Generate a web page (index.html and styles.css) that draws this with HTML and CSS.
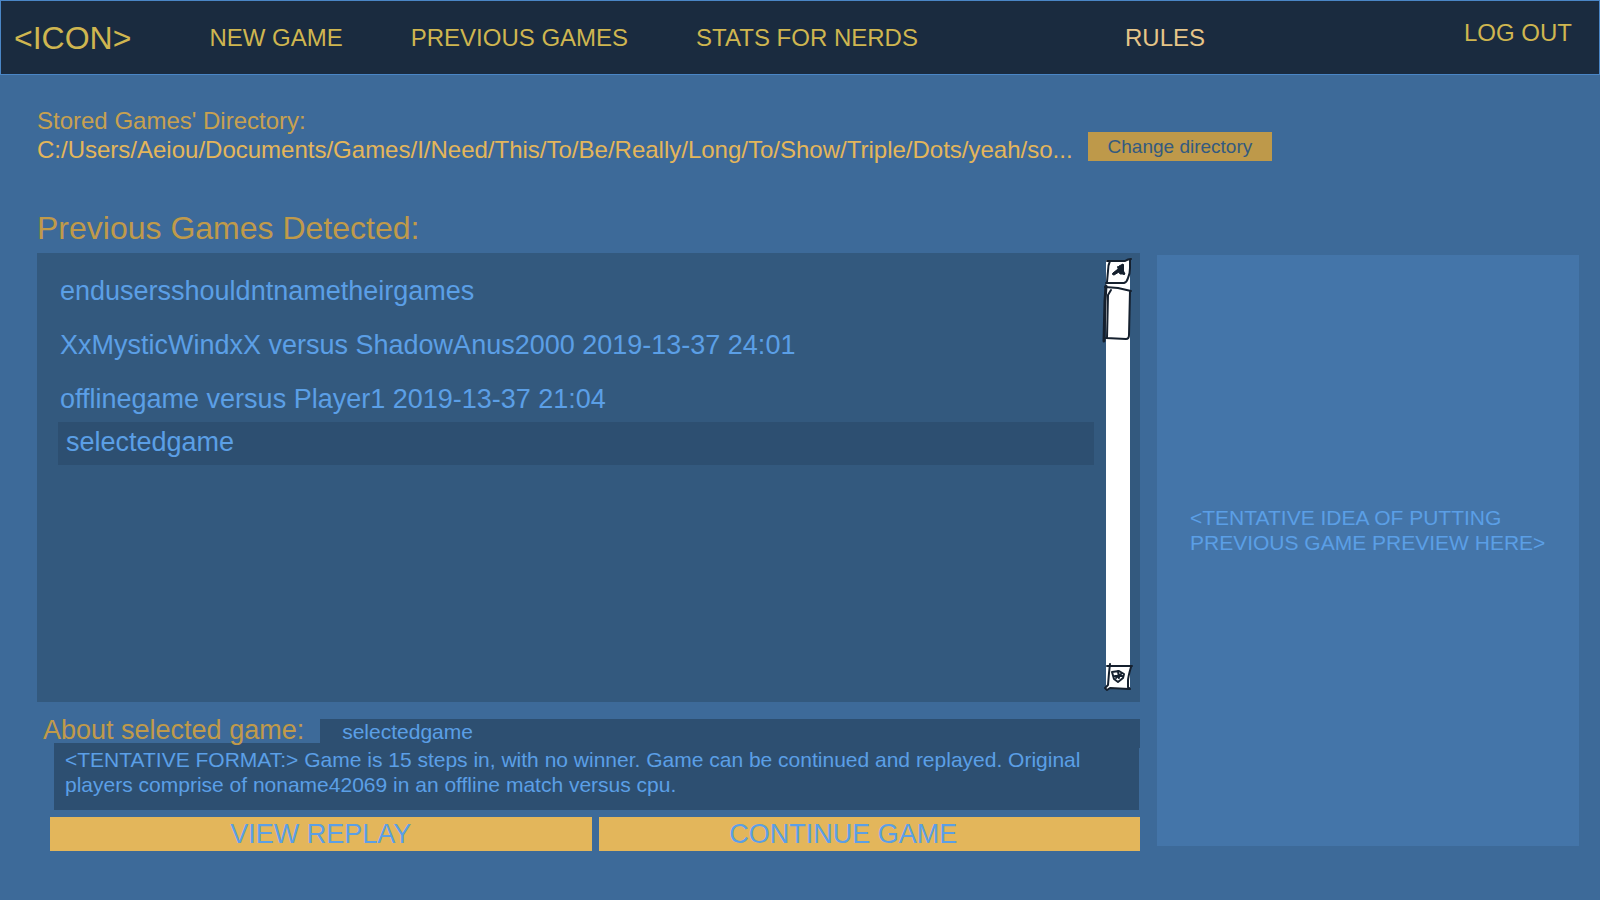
FILE: index.html
```html
<!DOCTYPE html>
<html lang="en">
<head>
<meta charset="utf-8">
<meta name="viewport" content="width=device-width, initial-scale=1">
<title>Previous Games</title>
<link rel="stylesheet" href="styles.css">
</head>
<body>
<header class="topbar">
  <a class="brand" href="#">&lt;ICON&gt;</a>
  <nav class="nav nav-main">
    <a href="#">NEW GAME</a>
    <a href="#">PREVIOUS GAMES</a>
    <a href="#">STATS FOR NERDS</a>
  </nav>
  <nav class="nav nav-help">
    <a class="rules" href="#">RULES</a>
  </nav>
  <a class="logout" href="#">LOG OUT</a>
</header>

<main class="page">
  <section class="directory">
    <div>
      <div class="directory-label">Stored Games' Directory:</div>
      <div class="directory-path">C:/Users/Aeiou/Documents/Games/I/Need/This/To/Be/Really/Long/To/Show/Triple/Dots/yeah/so...</div>
    </div>
    <button class="change" type="button">Change directory</button>
  </section>

  <h1 class="title">Previous Games Detected:</h1>

  <div class="columns">
    <section class="games">
      <div class="panel">
        <ul class="list">
          <li><button class="game" type="button">endusersshouldntnametheirgames</button></li>
          <li><button class="game" type="button">XxMysticWindxX versus ShadowAnus2000 2019-13-37 24:01</button></li>
          <li><button class="game" type="button">offlinegame versus Player1 2019-13-37 21:04</button></li>
          <li><button class="game selected" type="button">selectedgame</button></li>
        </ul>
        <div class="scrollbar">
          <button class="scroll-button" type="button" aria-label="Scroll up">
            <svg class="sketch" width="24" height="25" viewBox="0 1 24 25">
              <path d="M1 2 L19 2 Q22 0 25 0 M24 1 L24 9 Q24 15 22 19 Q21 23 18 24 L0 24 M4 2 Q2 6 2 12 L1 23"/>
              <path class="ink" d="M7 14 L12 10 L13 7 L17 5 L17 11 L19 15 L14 15 L13 13 L8 16 Z"/>
              <path d="M7 15 L13 11 L17 6 L17 14 M12 8 L18 15"/>
            </svg>
          </button>
          <svg class="sketch" width="24" height="56" viewBox="0 26 24 56">
            <path d="M-1 28 L12 29 L25 32 M24 32 L23 76 Q23 80 20 80 L0 79 M5 31 L2 36 L1 79"/>
            <path class="heavy" d="M0 27 L-1 42 L-2 82"/>
          </svg>
          <div class="track"></div>
          <button class="scroll-button" type="button" aria-label="Scroll down">
            <svg class="sketch" width="24" height="24" viewBox="0 0 24 24">
              <path d="M1 1 L26 1 M4 -1 L3 8 L2 20 L-1 23 L1 25 L4 23 L23 24 M25 2 Q22 12 22 16 L22 22 L24 24"/>
              <path d="M6 7 L13 6 L18 9 L17 13 L12 17 L8 14 Z M12 6 L13 13 M9 11 L16 11 M10 13 L15 9"/>
            </svg>
          </button>
        </div>
      </div>

      <div class="about">
        <label class="about-label" for="selected-name">About selected game:</label>
        <input class="about-name" id="selected-name" type="text" value="selectedgame" readonly>
      </div>
      <p class="details">&lt;TENTATIVE FORMAT:&gt; Game is 15 steps in, with no winner. Game can be continued and replayed. Original players comprise of noname42069 in an offline match versus cpu.</p>
      <div class="actions">
        <button class="action" type="button">VIEW REPLAY</button>
        <button class="action continue" type="button">CONTINUE GAME</button>
      </div>
    </section>

    <aside class="preview">
      <p>&lt;TENTATIVE IDEA OF PUTTING PREVIOUS GAME PREVIEW HERE&gt;</p>
    </aside>
  </div>
</main>
</body>
</html>
```
FILE: styles.css
```css
* {
  box-sizing: border-box;
}

body {
  margin: 0;
  min-height: 100vh;
  display: flex;
  flex-direction: column;
  background: #3d6a99;
  font-family: "Liberation Sans", Arial, sans-serif;
  color: #5b9fe6;
}

button,
input {
  margin: 0;
  padding: 0;
  border: 0;
  border-radius: 0;
  background: none;
  color: inherit;
  font: inherit;
}

a {
  color: inherit;
  text-decoration: none;
}

p {
  margin: 0;
}

/* Top bar */
.topbar {
  display: flex;
  align-items: center;
  min-height: 75px;
  padding: 0 27px 0 13px;
  border: 1px solid #4a86c6;
  background: #1a2b3f;
  color: #cfb650;
  font-size: 24px;
  line-height: 28px;
}

.brand {
  margin-right: 78px;
  font-size: 32px;
}

.nav {
  display: flex;
  gap: 68px;
}

.nav-main {
  flex: 4 0 auto;
}

.nav-help {
  flex: 5 0 auto;
}

.rules {
  color: #e6c588;
}

.logout {
  padding-bottom: 10px;
}

/* Page */
.page {
  flex: 1;
  display: flex;
  flex-direction: column;
  padding: 31px 21px 49px 37px;
}

.directory {
  display: flex;
  align-items: flex-end;
  gap: 15px;
  font-size: 24px;
  line-height: 29px;
}

.directory-label {
  color: #c8a150;
}

.directory-path {
  color: #e4b65a;
}

.change {
  margin-bottom: 3px;
  padding: 0 20px;
  background: #be994a;
  color: #335a80;
  font-size: 19px;
  line-height: 29px;
}

.title {
  margin: 46px 0 7px;
  color: #c09a4a;
  font-size: 32px;
  font-weight: 400;
  line-height: 36px;
}

.columns {
  flex: 1;
  display: grid;
  grid-template-columns: minmax(0, 1103fr) minmax(0, 422fr);
  gap: 17px;
}

.games {
  display: flex;
  flex-direction: column;
}

.panel {
  flex: 1;
  display: flex;
  gap: 12px;
  padding: 7px 10px 13px 21px;
  background: #33597e;
}

.list {
  flex: 1;
  margin: 0;
  padding: 0;
  list-style: none;
}

.game {
  display: block;
  width: 100%;
  padding: 16px 2px 8px;
  font-size: 27px;
  line-height: 30px;
  text-align: left;
}

.game.selected {
  padding: 5px 8px 8px;
  background: #2d4f71;
}

/* Hand-drawn scrollbar */
.scrollbar {
  display: flex;
  flex-direction: column;
  width: 24px;
  background: #fff;
}

.scroll-button {
  display: block;
}

.track {
  flex: 1;
}

.sketch {
  display: block;
  overflow: visible;
  fill: none;
  stroke: #15202e;
  stroke-width: 2;
  stroke-linecap: round;
  stroke-linejoin: round;
}

.sketch .ink {
  fill: #15202e;
  stroke-width: 1;
}

.sketch .heavy {
  stroke-width: 3;
}

/* Selected game */
.about {
  position: relative;
  z-index: 1;
  display: flex;
  align-items: baseline;
  gap: 16px;
  margin: 17px 0 -5px 6px;
}

.about-label {
  color: #c09a4a;
  font-size: 27px;
  line-height: 20px;
}

.about-name {
  flex: 1;
  min-width: 0;
  height: 29px;
  padding: 0 22px 4px;
  background: #2d4f71;
  font-size: 21px;
}

.details {
  margin: 0 1px 7px 17px;
  padding: 4px 12px 13px 11px;
  background: #2d4f71;
  font-size: 21px;
  line-height: 25px;
}

.actions {
  display: grid;
  grid-template-columns: 1fr 1fr;
  gap: 7px;
  margin-left: 13px;
}

.action {
  background: #e3b65b;
  font-size: 27px;
  line-height: 34px;
}

.continue {
  padding-right: 52px;
}

.preview {
  display: flex;
  align-items: center;
  margin: 2px 0 5px;
  padding: 0 24px 42px 33px;
  background: #4475a9;
  font-size: 21px;
  line-height: 25px;
}
```
